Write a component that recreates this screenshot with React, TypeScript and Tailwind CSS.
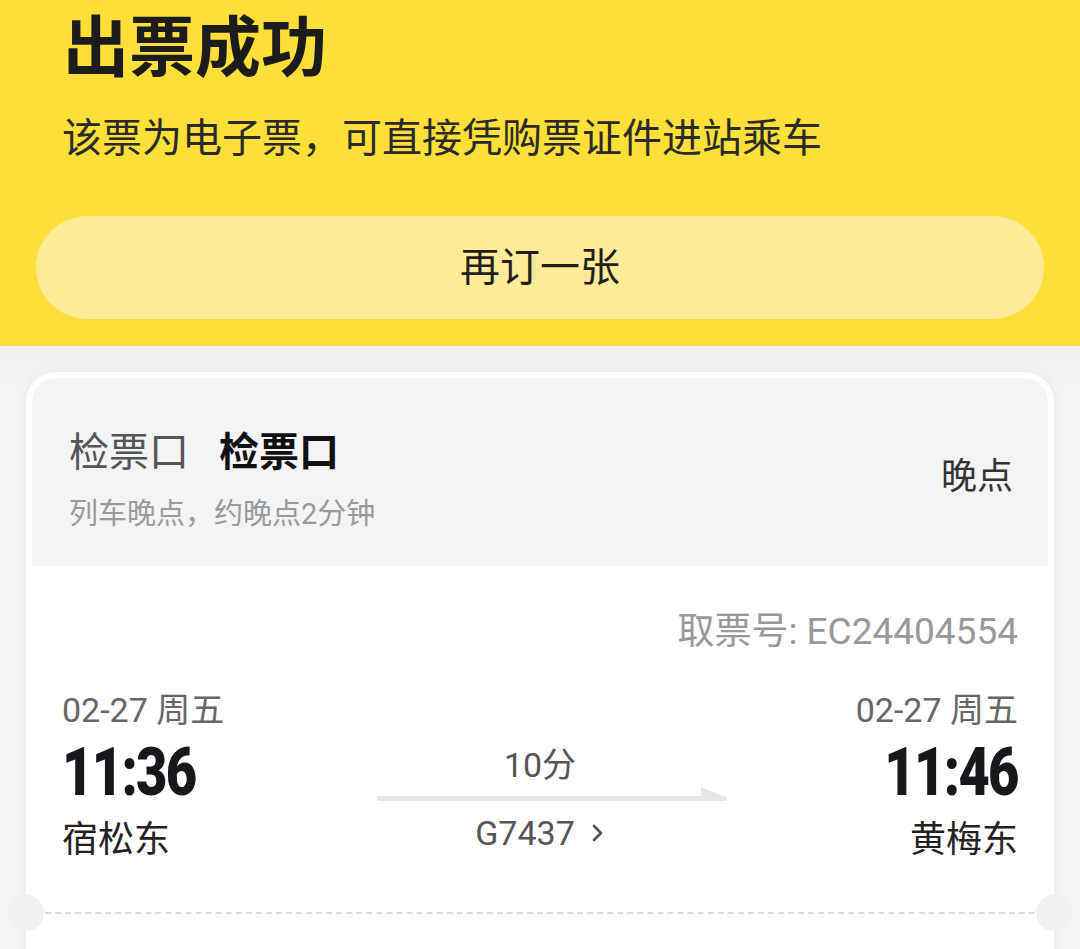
import React from "react";

const F = { fontFamily: 'Roboto, "Noto Sans CJK SC", sans-serif' } as React.CSSProperties;

function Arrow() {
  return (
    <svg width="350" height="16" viewBox="0 0 350 16" className="block">
      <rect x="0" y="10" width="350" height="5" rx="2.5" fill="#e6e6e6" />
      <path d="M324 1 L350 12 L324 12 Z" fill="#e6e6e6" />
    </svg>
  );
}

export default function App() {
  return (
    <div className="w-[1080px] h-[949px] overflow-hidden bg-[#f3f4f5]" style={F}>
      {/* Yellow header */}
      <div className="bg-[#fedf3a] px-[36px] pt-[16px] pb-[27px]">
        <div className="pl-[27px] text-[66px] leading-[66px] font-bold text-[#1c1c1c]">出票成功</div>
        <div className="pl-[26px] mt-[37px] text-[40px] leading-[40px] text-[#2a2a2a]">
          该票为电子票，可直接凭购票证件进站乘车
        </div>
        <div className="mt-[57px] h-[103px] rounded-full bg-[#fdeb98] flex items-center justify-center text-[40px] text-[#1f1f1f]">
          再订一张
        </div>
      </div>

      {/* Card */}
      <div className="px-[26px] pt-[26px] bg-gradient-to-b from-[#eef0f2] to-[#f4f4f4] to-[40px]">
        <div className="relative bg-white rounded-[30px] p-[6px] shadow-[0_0_14px_rgba(0,0,0,0.05)]">
          <div className="bg-[#f3f4f6] rounded-t-[24px] h-[188px] pl-[37px] pr-[35px] flex items-center justify-between">
            <div className="flex flex-col mt-[18px]">
              <div className="flex items-center text-[40px] leading-[40px]">
                <span className="text-[#555]">检票口</span>
                <span className="ml-[30px] font-bold text-[#111]">检票口</span>
              </div>
              <div className="mt-[27px] text-[29px] leading-[29px] text-[#999]">列车晚点，约晚点2分钟</div>
            </div>
            <div className="text-[36px] leading-[36px] text-[#333] mt-[10px]">晚点</div>
          </div>

          <div className="px-[30px] pt-[48px]">
            <div className="text-right text-[37px] leading-[36px] text-[#999]">取票号: EC24404554</div>
            <div className="mt-[43px] grid grid-cols-[1fr_350px_1fr]">
              <div className="flex flex-col items-start">
                <div className="text-[34px] leading-[34px] text-[#666]">02-27 周五</div>
                <div className="mt-[14px] text-[66px] leading-[64px] font-black tracking-[-2px] text-[#16181c] scale-x-[0.82] origin-left">11:36</div>
                <div className="mt-[17px] text-[36px] leading-[36px] text-[#222]">宿松东</div>
              </div>
              <div className="flex flex-col items-center">
                <div className="mt-[55px] text-[34px] leading-[34px] text-[#555]">10分</div>
                <div className="mt-[4px] ml-[24px]">
                  <Arrow />
                </div>
                <div className="mt-[14px] flex items-center text-[34px] leading-[34px] text-[#555]">
                  <span>G7437</span>
                  <svg width="14" height="20" viewBox="0 0 14 20" className="ml-[16px]">
                    <path d="M3 3 L10 10 L3 17" stroke="#555" strokeWidth="2.6" fill="none" strokeLinecap="round" strokeLinejoin="round" />
                  </svg>
                </div>
              </div>
              <div className="flex flex-col items-end">
                <div className="text-[34px] leading-[34px] text-[#666]">02-27 周五</div>
                <div className="mt-[14px] text-[66px] leading-[64px] font-black tracking-[-2px] text-[#16181c] scale-x-[0.82] origin-right">11:46</div>
                <div className="mt-[17px] text-[36px] leading-[36px] text-[#222]">黄梅东</div>
              </div>
            </div>
            <div className="mt-[54px] border-t-2 border-dashed border-[#dcdcdc] -mx-[17px]" />
            <div className="h-[60px]" />
          </div>

          <div className="absolute left-[-18px] top-[523px] w-[36px] h-[36px] rounded-full bg-[#f1f1f2]" />
          <div className="absolute right-[-18px] top-[523px] w-[36px] h-[36px] rounded-full bg-[#f1f1f2]" />
        </div>
      </div>
    </div>
  );
}
